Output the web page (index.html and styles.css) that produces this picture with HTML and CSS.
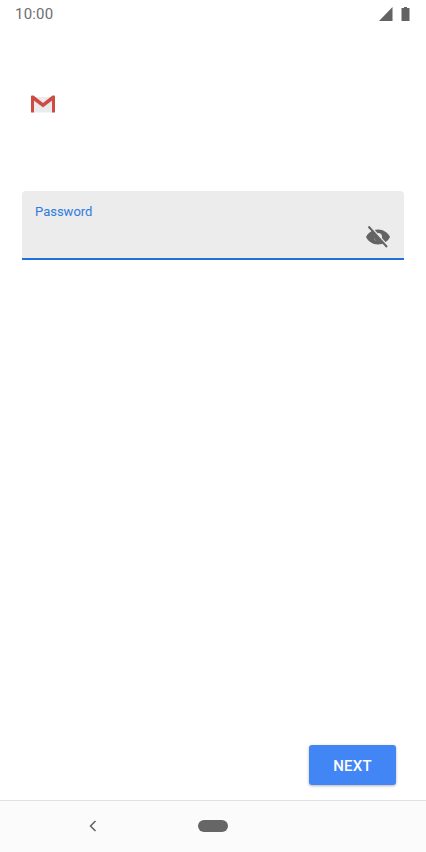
FILE: index.html
```html
<!DOCTYPE html>
<html lang="en">
<head>
    <meta charset="UTF-8">
    <meta name="viewport" content="width=device-width, initial-scale=1.0">
    <title>Password</title>
    <link rel="stylesheet" href="styles.css">
</head>
<body>
    <div class="screen">
        <div class="status-bar">
            <span class="clock">10:00</span>
            <div class="status-icons">
                <svg class="signal" width="14" height="14" viewBox="0 0 14 14"><path d="M13.500 0V14H0Z" fill="#636363"/></svg>
                <svg class="battery" width="9" height="14" viewBox="0 0 9 14"><path d="M3 0H6V1H8.500V14H0.500V1H3Z" fill="#636363"/></svg>
            </div>
        </div>
        <div class="logo-row">
            <svg width="26" height="18" viewBox="0 0 26 18">
                <path d="M3 2H23V17.500H3Z" fill="#ebebeb"/>
                <path d="M3 2L13 10L23 2V5.500L13 13L3 5.500Z" fill="#ddd6d4"/>
                <path d="M1 1.500Q1 0.500 2 0.500H3.500L13 8L22.500 0.500H24Q25 0.500 25 1.500V17Q25 17.500 24.500 17.500H22V5.500L13 12.300L4 5.500V17.500H1.500Q1 17.500 1 17Z" fill="#cf4a40"/>
            </svg>
        </div>
        <div class="field">
            <label class="field-label">Password</label>
            <svg class="eye" width="26" height="24" viewBox="0 0 26 24">
                <path d="M13 4.500C7.500 4.500 3 7.700 1 12C3 16.300 7.500 19.500 13 19.500C18.500 19.500 23 16.300 25 12C23 7.700 18.500 4.500 13 4.500Z" fill="#636363"/>
                <circle cx="13" cy="12" r="4" fill="#ebebeb"/>
                <path d="M10.300 9A4 4 0 0 0 15.700 15Z" fill="#636363"/>
                <path d="M5 1.500L23 21.500" stroke="#ebebeb" stroke-width="2.500"/>
                <path d="M3.500 1.500L22 22" stroke="#636363" stroke-width="2"/>
            </svg>
        </div>
        <div class="spacer"></div>
        <div class="actions">
            <button class="next">NEXT</button>
        </div>
        <div class="nav-bar">
            <svg class="back" width="10" height="14" viewBox="0 0 10 14"><path d="M7.500 2L2.500 7L7.500 12" fill="none" stroke="#5f5f5f" stroke-width="1.500"/></svg>
            <div class="home-pill"></div>
        </div>
    </div>
</body>
</html>
```

FILE: styles.css
```css
* {
    box-sizing: border-box;
}
html, body {
    margin: 0;
    padding: 0;
    background-color: #fff;
}
body {
    font-family: Roboto, "Liberation Sans", sans-serif;
}
.screen {
    width: 426px;
    height: 852px;
    display: flex;
    flex-direction: column;
    overflow: hidden;
}
.status-bar {
    height: 28px;
    padding: 0 16px 0 15px;
    display: flex;
    align-items: center;
    justify-content: space-between;
}
.clock {
    font-size: 15px;
    color: #6e6e6e;
    letter-spacing: 0.2px;
}
.status-icons {
    display: flex;
    align-items: center;
    gap: 8px;
}
.logo-row {
    padding: 67px 0 0 30px;
    height: 163px;
}
.logo-row svg {
    display: block;
}
.field {
    margin: 0 22px;
    height: 69px;
    padding: 13px 13px 0;
    background-color: #ececec;
    border-bottom: 2px solid #1f72da;
    border-radius: 4px 4px 0 0;
    display: flex;
    justify-content: space-between;
}
.field-label {
    font-size: 13px;
    line-height: 15px;
    color: #2b7bdf;
}
.eye {
    margin: 21px 0 0 0;
}
.spacer {
    flex: 1;
}
.actions {
    display: flex;
    justify-content: flex-end;
    padding: 0 30px 15px 0;
}
.next {
    width: 87px;
    height: 40px;
    border: none;
    border-radius: 3px;
    padding: 2px 0 0;
    background-color: #4285f4;
    color: #fff;
    font-family: inherit;
    font-size: 15px;
    font-weight: 500;
    letter-spacing: 0.2px;
    box-shadow: 0 1px 3px rgba(0, 0, 0, 0.3);
}
.nav-bar {
    height: 52px;
    border-top: 1px solid #e0e0e0;
    background-color: #fbfbfb;
    padding: 0 0 2px 88px;
    display: flex;
    align-items: center;
    gap: 100px;
}
.back {
    display: block;
}
.home-pill {
    width: 30px;
    height: 12px;
    border-radius: 6px;
    background-color: #666;
}
```
